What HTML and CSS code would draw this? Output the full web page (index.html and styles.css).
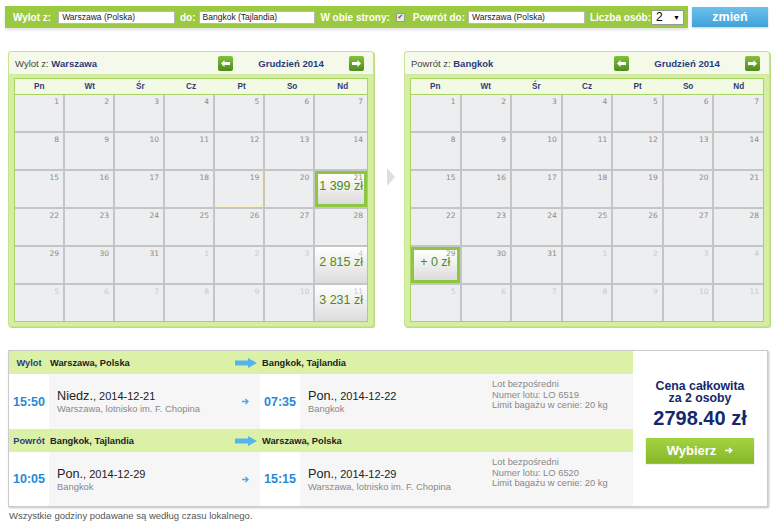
FILE: index.html
```html
<!DOCTYPE html>
<html lang="pl">
<head>
<meta charset="UTF-8">
<title>Wyszukiwarka lotów</title>
<link rel="stylesheet" href="styles.css">
</head>
<body>
<div class="search">
  <div class="search-bar">
    <span class="lbl">Wylot z:</span>
    <span class="field">Warszawa (Polska)</span>
    <span class="lbl">do:</span>
    <span class="field near">Bangkok (Tajlandia)</span>
    <span class="lbl">W obie strony:</span>
    <span class="check">✔</span>
    <span class="lbl wide">Powrót do:</span>
    <span class="field near">Warszawa (Polska)</span>
    <span class="lbl">Liczba osób:</span>
    <span class="select">2 <i>▼</i></span>
  </div>
  <a class="btn-change">zmień</a>
</div>

<div class="calendars">
  <div class="cal">
    <div class="cal-head">
      <div class="cal-title">Wylot z: <b>Warszawa</b></div>
      <div class="cal-nav">
        <span class="nav-btn"><svg width="9" height="7" viewBox="0 0 9 7"><path d="M0 3.5L3.5 0V2H9V5H3.5V7Z" fill="#fff"/></svg></span>
        <span class="month">Grudzień 2014</span>
        <span class="nav-btn"><svg width="9" height="7" viewBox="0 0 9 7"><path d="M9 3.5L5.5 0V2H0V5H5.5V7Z" fill="#fff"/></svg></span>
      </div>
    </div>
    <div class="cal-body">
      <div class="cal-grid">
        <div class="weekdays"><span>Pn</span><span>Wt</span><span>Śr</span><span>Cz</span><span>Pt</span><span>So</span><span>Nd</span></div>
        <div class="days" id="out-days"></div>
      </div>
    </div>
  </div>
  <div class="cal-gap"><span class="chevron"></span></div>
  <div class="cal">
    <div class="cal-head">
      <div class="cal-title">Powrót z: <b>Bangkok</b></div>
      <div class="cal-nav">
        <span class="nav-btn"><svg width="9" height="7" viewBox="0 0 9 7"><path d="M0 3.5L3.5 0V2H9V5H3.5V7Z" fill="#fff"/></svg></span>
        <span class="month">Grudzień 2014</span>
        <span class="nav-btn"><svg width="9" height="7" viewBox="0 0 9 7"><path d="M9 3.5L5.5 0V2H0V5H5.5V7Z" fill="#fff"/></svg></span>
      </div>
    </div>
    <div class="cal-body">
      <div class="cal-grid">
        <div class="weekdays"><span>Pn</span><span>Wt</span><span>Śr</span><span>Cz</span><span>Pt</span><span>So</span><span>Nd</span></div>
        <div class="days" id="back-days"></div>
      </div>
    </div>
  </div>
</div>

<div class="result">
  <div class="flights">
    <div class="leg-head">
      <div class="c-time leg-label">Wylot</div>
      <div class="c-from">Warszawa, Polska <svg width="22" height="10" viewBox="0 0 22 10"><path d="M0 2.5H13V0L22 5L13 10V7.5H0Z" fill="#55b4ea"/></svg></div>
      <div class="c-to">Bangkok, Tajlandia</div>
    </div>
    <div class="leg-row">
      <div class="c-time">15:50</div>
      <div class="c-from">
        <div class="place">
          <div class="when"><b>Niedz.</b>, 2014-12-21</div>
          <div class="where">Warszawa, lotnisko im. F. Chopina</div>
        </div>
        <svg width="7" height="7" viewBox="0 0 7 7"><path d="M0 3.5H6M3.5 1L6 3.5L3.5 6" fill="none" stroke="#45ade7" stroke-width="1.4"/></svg>
      </div>
      <div class="c-time">07:35</div>
      <div class="c-rest">
        <div class="place">
          <div class="when"><b>Pon.</b>, 2014-12-22</div>
          <div class="where">Bangkok</div>
        </div>
        <div class="info">Lot bezpośredni<br>Numer lotu: LO 6519<br>Limit bagażu w cenie: 20 kg</div>
      </div>
    </div>
    <div class="leg-head">
      <div class="c-time leg-label">Powrót</div>
      <div class="c-from">Bangkok, Tajlandia <svg width="22" height="10" viewBox="0 0 22 10"><path d="M0 2.5H13V0L22 5L13 10V7.5H0Z" fill="#55b4ea"/></svg></div>
      <div class="c-to">Warszawa, Polska</div>
    </div>
    <div class="leg-row last">
      <div class="c-time">10:05</div>
      <div class="c-from">
        <div class="place">
          <div class="when"><b>Pon.</b>, 2014-12-29</div>
          <div class="where">Bangkok</div>
        </div>
        <svg width="7" height="7" viewBox="0 0 7 7"><path d="M0 3.5H6M3.5 1L6 3.5L3.5 6" fill="none" stroke="#45ade7" stroke-width="1.4"/></svg>
      </div>
      <div class="c-time">15:15</div>
      <div class="c-rest">
        <div class="place">
          <div class="when"><b>Pon.</b>, 2014-12-29</div>
          <div class="where">Warszawa, lotnisko im. F. Chopina</div>
        </div>
        <div class="info">Lot bezpośredni<br>Numer lotu: LO 6520<br>Limit bagażu w cenie: 20 kg</div>
      </div>
    </div>
  </div>
  <div class="total">
    <div class="total-label">Cena całkowita<br>za 2 osoby</div>
    <div class="total-price">2798.40 zł</div>
    <a class="btn-select">Wybierz <svg width="8" height="7" viewBox="0 0 8 7"><path d="M0 3.5H7M4 1L6.8 3.5L4 6" fill="none" stroke="#fff" stroke-width="1.5"/></svg></a>
  </div>
</div>
<p class="note">Wszystkie godziny podawane są według czasu lokalnego.</p>

<script>
function drawMonth(wrap, prices, selected, today) {
  var strHtml = '';
  for (var i = 0; i < 42; i++) {
    var day = i + 1;
    var other = day > 31;
    if (other) day -= 31;
    var key = (other ? 'n' : '') + day;
    var cls = 'day';
    if (other) cls += ' other';
    if (prices[key]) cls += ' price';
    if (key === selected) cls += ' selected';
    if (key === today) cls += ' today';
    strHtml += '<div class="' + cls + '"><span class="num">' + day + '</span>' +
      (prices[key] ? '<span class="cost">' + prices[key] + '</span>' : '') + '</div>';
  }
  wrap.innerHTML = strHtml;
}

drawMonth(document.getElementById('out-days'), {'21': '1 399 zł', 'n4': '2 815 zł', 'n11': '3 231 zł'}, '21', '19');
drawMonth(document.getElementById('back-days'), {'29': '+ 0 zł'}, '29', '');
</script>
</body>
</html>
```

FILE: styles.css
```css
* {
  margin: 0;
  padding: 0;
  box-sizing: border-box;
}
body {
  width: 777px;
  background-color: #fff;
  font-family: "Liberation Sans", Arial, sans-serif;
  color: #333;
}

/* search bar */
.search {
  display: flex;
  align-items: center;
  height: 22px;
  margin: 6px 0 0 5px;
}
.search-bar {
  display: flex;
  align-items: center;
  width: 683px;
  height: 22px;
  padding: 0 4px 0 8px;
  background-color: #9bc93f;
  box-shadow: 0 2px 3px rgba(0, 0, 0, .12);
  color: #fff;
  font-size: 10px;
  font-weight: bold;
}
.search-bar .lbl {
  margin-left: 5px;
  white-space: nowrap;
}
.search-bar .lbl:first-child {
  margin-left: 0;
}
.search-bar .lbl.wide {
  margin-left: 8px;
}
.field {
  width: 117px;
  height: 13px;
  margin-left: 7px;
  padding-left: 3px;
  background-color: #fff;
  border: 1px solid #b9b9b9;
  color: #222;
  font-size: 8.5px;
  font-weight: normal;
  line-height: 11px;
  white-space: nowrap;
}
.field.near {
  margin-left: 3px;
}
.check {
  width: 9px;
  height: 9px;
  margin-left: 6px;
  background-color: #ececec;
  border: 1px solid #9a9a9a;
  color: #555;
  font-family: "DejaVu Sans", sans-serif;
  font-size: 7px;
  line-height: 7px;
  text-align: center;
}
.select {
  display: flex;
  justify-content: space-between;
  align-items: center;
  width: 33px;
  height: 15px;
  margin-left: auto;
  padding: 0 3px 0 4px;
  background-color: #fff;
  border: 1px solid #999;
  color: #000;
  font-size: 12px;
  font-weight: normal;
}
.select i {
  font-style: normal;
  font-size: 7px;
}
.btn-change {
  width: 76px;
  height: 20px;
  margin-left: 4px;
  background: linear-gradient(#6cc1eb, #40a2d9);
  box-shadow: 0 1px 2px rgba(0, 0, 0, .2);
  color: #fff;
  font-size: 12.5px;
  font-weight: bold;
  line-height: 20px;
  text-align: center;
}

/* calendars */
.calendars {
  display: flex;
  margin: 23px 0 0 8px;
}
.cal {
  width: 366px;
  background-color: #d5eea2;
  border: 1px solid #c5e491;
  border-radius: 3px;
  box-shadow: 1px 1px 0 #bcdc83;
}
.cal-head {
  display: flex;
  align-items: center;
  height: 23px;
  padding: 0 9px 0 6px;
  background-color: #f4f9ea;
  border-bottom: 1px solid #cfe8a3;
  border-radius: 3px 3px 0 0;
  font-size: 9.5px;
}
.cal-title {
  flex: 1;
  color: #444;
}
.cal-title b {
  color: #2a3b7c;
}
.cal-nav {
  display: flex;
  align-items: center;
}
.nav-btn {
  display: flex;
  align-items: center;
  justify-content: center;
  width: 15px;
  height: 15px;
  background: linear-gradient(#84c038, #4c8c1a);
  border-radius: 2px;
}
.month {
  width: 116px;
  color: #2a3b7c;
  font-size: 9.6px;
  font-weight: bold;
  text-align: center;
}
.cal-body {
  padding: 3px 5px 4px;
}
.cal-grid {
  border: 1px solid #a8d461;
}
.weekdays {
  display: grid;
  grid-template-columns: repeat(7, 1fr);
  column-gap: 2px;
  height: 16px;
  background-color: #f3fae3;
  border-bottom: 1px solid #a8d461;
  color: #2d3c78;
  font-size: 8.2px;
  font-weight: bold;
  line-height: 15px;
  text-align: center;
}
.days {
  display: grid;
  grid-template-columns: repeat(7, 1fr);
  grid-auto-rows: 36px;
  gap: 2px;
  background-color: #c4c5c7;
}
.day {
  padding: 4px 4px 0;
  background-color: #eceef0;
  color: #8a8a8a;
  font-family: "DejaVu Sans", sans-serif;
  font-size: 7.5px;
  text-align: right;
}
.day.other {
  color: #c9c9c9;
}
.day.today {
  padding: 3px 3px 0;
  border: 1px solid #f6efcc;
}
.day.price {
  background: linear-gradient(#fff, #dcdcdc);
}
.day.selected {
  padding: 1px 1px 0;
  border: 3px solid #8dc63f;
}
.num {
  display: block;
  line-height: 6px;
}
.cost {
  display: block;
  color: #4c8b23;
  font-family: "Liberation Sans", Arial, sans-serif;
  font-size: 12.5px;
  line-height: 11px;
  text-align: center;
  white-space: nowrap;
}
.cal-gap {
  width: 30px;
  padding: 117px 0 0 13px;
}
.chevron {
  display: block;
  width: 0;
  height: 0;
  border-left: 8px solid #dcdfe2;
  border-top: 9px solid transparent;
  border-bottom: 9px solid transparent;
}

/* flight summary */
.result {
  display: flex;
  width: 760px;
  margin: 23px 0 0 8px;
  border: 1px solid #cbcbcb;
  box-shadow: 1px 1px 2px rgba(0, 0, 0, .25);
}
.flights {
  width: 624px;
}
.c-time {
  flex: none;
  width: 40px;
  text-align: center;
}
.c-from {
  flex: none;
  display: flex;
  align-items: center;
  justify-content: space-between;
  width: 211px;
}
.leg-head {
  display: flex;
  align-items: center;
  height: 23px;
  background-color: #dcf1a8;
  color: #222;
  font-size: 9.3px;
  font-weight: bold;
}
.leg-head .leg-label {
  color: #2a3b7c;
}
.leg-head .c-from {
  padding: 0 3px 0 1px;
}
.leg-head .c-to {
  padding-left: 2px;
}
.leg-row {
  display: flex;
  height: 55px;
}
.leg-row.last {
  height: 54px;
}
.leg-row .c-time {
  display: flex;
  align-items: center;
  justify-content: center;
  background-color: #fff;
  color: #1f8ad8;
  font-size: 12.5px;
  font-weight: bold;
}
.leg-row .c-from {
  padding: 0 11px 0 8px;
  background-color: #f6f6f6;
}
.c-rest {
  flex: 1;
  display: flex;
  padding-left: 8px;
  background-color: #f6f6f6;
}
.c-rest .place {
  width: 184px;
  align-self: center;
}
.when {
  color: #222;
  font-size: 11px;
  line-height: 14px;
  white-space: nowrap;
}
.when b {
  font-size: 12.7px;
  font-weight: normal;
}
.where {
  color: #888;
  font-size: 9.4px;
  line-height: 11px;
  white-space: nowrap;
}
.info {
  padding-top: 5px;
  color: #888;
  font-size: 9.4px;
  line-height: 10.5px;
}
.total {
  width: 134px;
  padding-top: 29px;
  background-color: #fff;
  color: #14296c;
  font-weight: bold;
  text-align: center;
}
.total-label {
  font-size: 12.3px;
  line-height: 12px;
}
.total-price {
  margin-top: 2px;
  font-size: 20px;
  line-height: 24px;
}
.btn-select {
  display: flex;
  align-items: center;
  justify-content: center;
  gap: 9px;
  width: 108px;
  height: 25px;
  margin: 8px auto 0;
  background: linear-gradient(#a4d341, #86b829);
  box-shadow: 0 1px 1px rgba(0, 0, 0, .35);
  color: #fff;
  font-size: 13px;
}
.note {
  margin: 3px 0 0 9px;
  color: #555;
  font-size: 9.5px;
  line-height: 12px;
}
```
